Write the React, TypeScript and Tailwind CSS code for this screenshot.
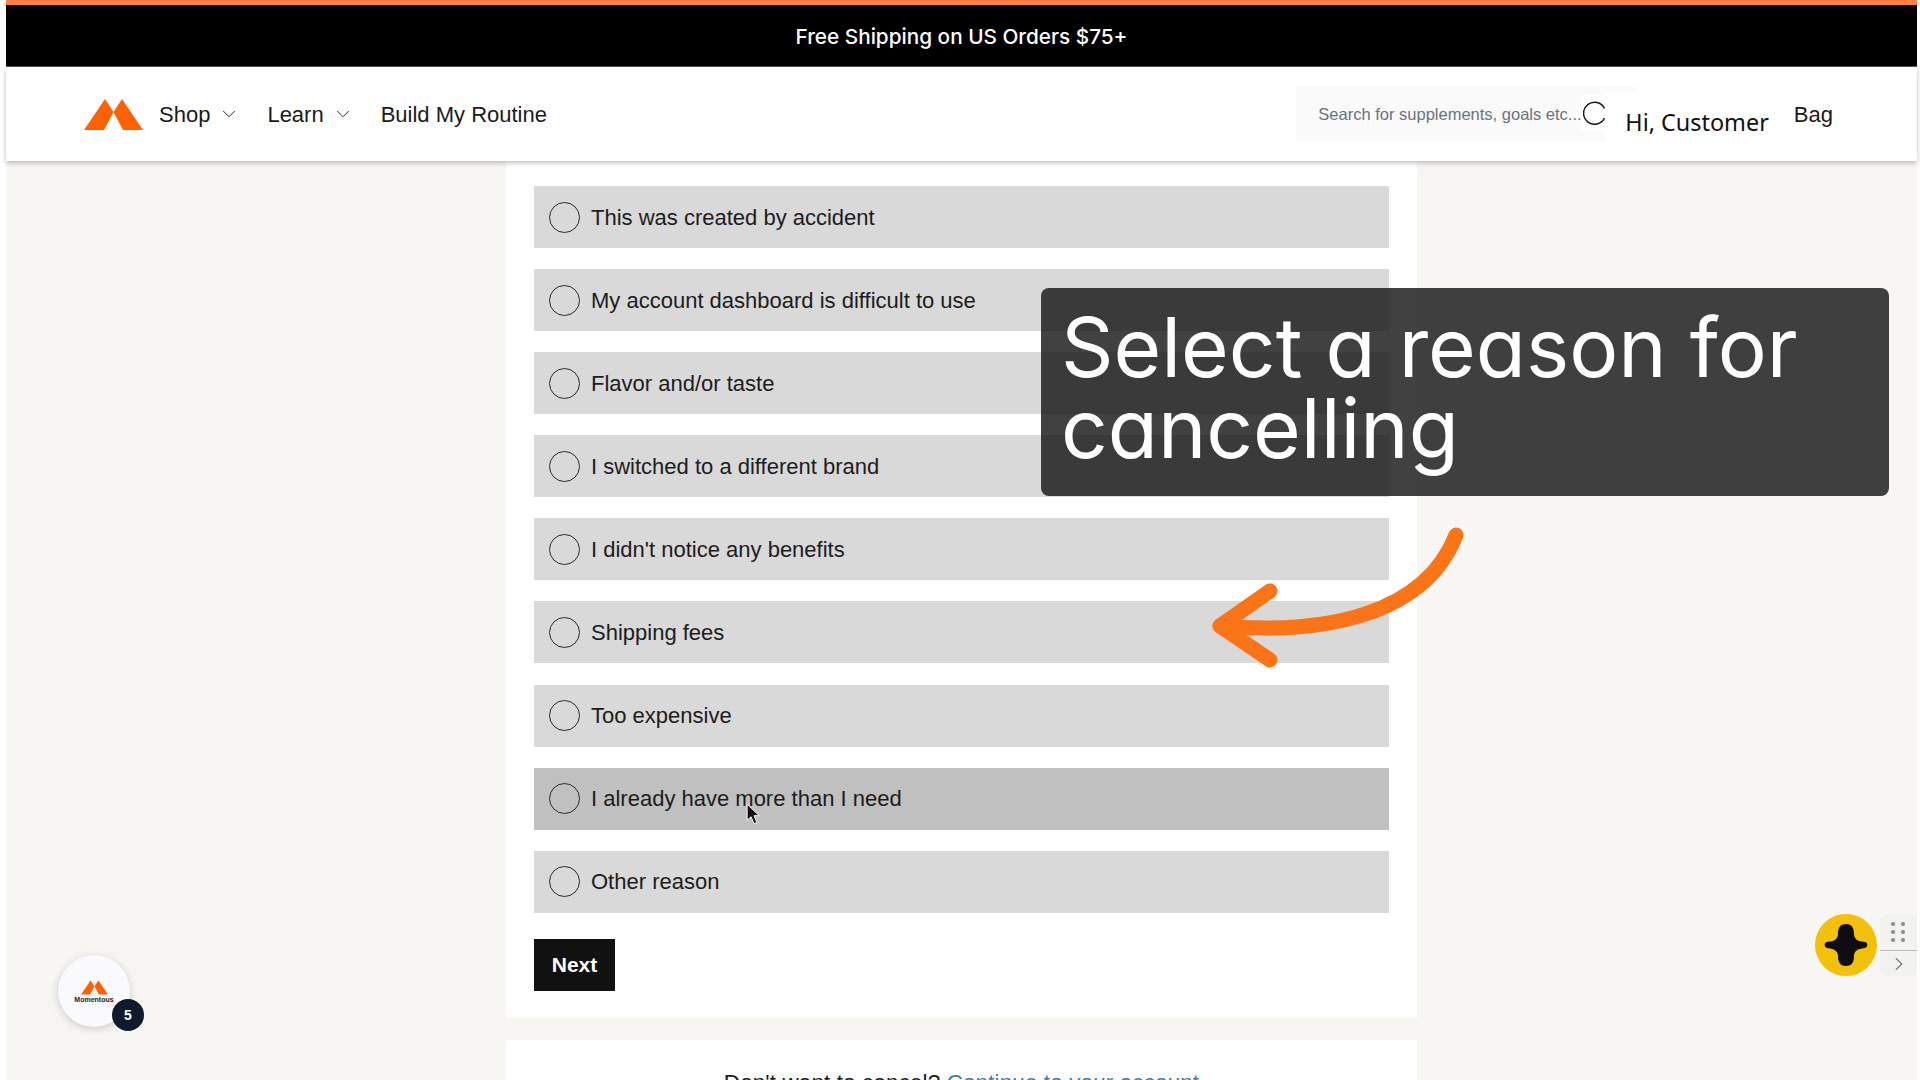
import { ChevronDown, ChevronRight } from "lucide-react";

const reasons = [
  "This was created by accident",
  "My account dashboard is difficult to use",
  "Flavor and/or taste",
  "I switched to a different brand",
  "I didn't notice any benefits",
  "Shipping fees",
  "Too expensive",
  "I already have more than I need",
  "Other reason",
];

const Logo = ({ className }: { className: string }) => (
  <svg viewBox="0 0 59 31" className={className} fill="#ff6000">
    <polygon points="0,31 21,0 29.5,13 20,31" />
    <polygon points="59,31 38,0 29.5,13 39,31" />
  </svg>
);

const ReasonRow = ({ label, hovered }: { label: string; hovered: boolean }) => (
  <div
    className={`h-[62px] flex items-center pl-[15px] ${hovered ? "bg-[#c0c0c0]" : "bg-[#d9d9d9]"}`}
  >
    <span className="w-[31px] h-[31px] rounded-full border-[1.5px] border-[#2a2a2a] shrink-0" />
    <span className="ml-[11px] text-[22px] text-[#1c1c1c]">{label}</span>
  </div>
);

export default function App() {
  return (
    <div className="relative w-[1920px] h-[1080px] overflow-hidden bg-white pl-[6px] pr-[3px] font-['Liberation_Sans',sans-serif]">
      <div className="h-[5px] bg-[#ff8140]" />
      <div className="h-[62px] bg-black flex items-center justify-center pt-[2px] text-white text-[20.75px] font-medium font-['Inter',sans-serif] border-b border-[#555]">
        Free Shipping on US Orders $75+
      </div>

      <header className="relative z-10 h-[94px] bg-white flex items-center pl-[78px] pr-[84px] shadow-[0_2px_5px_rgba(0,0,0,0.25)] text-[#1a1a1a] text-[22px]">
        <Logo className="w-[59px] h-[31px]" />
        <span className="ml-[16px]">Shop</span>
        <ChevronDown className="ml-[8px] w-[22px] h-[22px]" strokeWidth={1} />
        <span className="ml-[27px]">Learn</span>
        <ChevronDown className="ml-[8px] w-[22px] h-[22px]" strokeWidth={1} />
        <span className="ml-[27px]">Build My Routine</span>

        <div className="ml-auto self-stretch flex items-stretch">
          <div className="mt-[20px] mb-[19px] w-[341px] bg-[#fafafa] flex items-center pl-[22px] text-[16.5px] text-[#6b7280]">
            <span className="w-[263px] whitespace-nowrap">Search for supplements, goals etc...</span>
            <span className="mb-[4px] w-[28px] h-[36px] bg-white flex items-center justify-center">
              <svg viewBox="0 0 24 24" className="w-[24px] h-[24px] text-[#1a1a1a]" fill="none" stroke="currentColor" strokeWidth="1.5">
                <path d="M21.5 7.5A11 11 0 1 0 21.5 17" />
              </svg>
            </span>
          </div>
          <div className="ml-[-32px] mt-[25px] bg-white pl-[20px] flex items-start pt-[13px] font-['Noto_Sans',sans-serif] text-[23.4px] text-[#111]">
            Hi, Customer
          </div>
          <div className="ml-[25px] flex items-center text-[22px] pt-[1px]">Bag</div>
        </div>
      </header>

      <main className="bg-[#f7f6f3] h-[919px] flex flex-col items-center gap-[22px]">
        <section className="w-[911px] bg-white pt-[25px] pb-[27px] px-[28px]">
          <div className="flex flex-col gap-[21.1px]">
            {reasons.map((r, i) => (
              <ReasonRow key={r} label={r} hovered={i === 7} />
            ))}
          </div>
          <button className="mt-[26px] w-[81px] h-[52px] bg-[#111] text-white text-[21px] font-bold block">
            Next
          </button>
        </section>
        <section className="w-[911px] flex-1 bg-white pt-[26px] text-center text-[22.5px] tracking-[0.1px] text-[#1c1c1c]">
          Don't want to cancel? <span className="text-[#3f7ea6]">Continue to your account</span>
        </section>
      </main>

      {/* floating widget, bottom left */}
      <div className="absolute left-[58px] top-[955px] w-[72px] h-[72px] rounded-full bg-[#fafafc] shadow-[0_2px_8px_rgba(0,0,0,0.18)] flex flex-col items-center pt-[25px]">
        <Logo className="w-[27px] h-[15px]" />
        <span className="text-[7px] leading-[9px] font-bold text-[#222]">Momentous</span>
        <span className="absolute left-[54px] top-[44px] w-[32px] h-[32px] rounded-full bg-[#101a2c] text-white text-[14px] font-bold flex items-center justify-center">
          5
        </span>
      </div>

      {/* assistant button, right edge */}
      <div className="absolute left-[1815px] top-[914px] flex items-center">
        <div className="w-[62px] h-[62px] rounded-full bg-[#f3c00a] flex items-center justify-center">
          <svg viewBox="-24 -24 48 48" className="w-[48px] h-[48px]" fill="#0d0d12">
            <path d="M0,-21 C6,-21 8,-17 8,-11 C8,-6 12,-3.5 18,-3.2 C22.5,-3 22.5,3 18,3.2 C12,3.5 8,6 8,11 C8,17 6,21 0,21 C-6,21 -8,17 -8,11 C-8,6 -12,3.5 -18,3.2 C-22.5,3 -22.5,-3 -18,-3.2 C-12,-3.5 -8,-6 -8,-11 C-8,-17 -6,-21 0,-21 Z" />
          </svg>
        </div>
        <div className="ml-[3px] w-[37px] h-[62px] rounded-[8px] bg-[#f2f2f0] flex flex-col">
          <div className="h-[37px] border-b border-[#bbb] grid grid-cols-2 gap-x-[5px] gap-y-[4px] justify-center content-center px-[11px]">
            {[0, 1, 2, 3, 4, 5].map((d) => (
              <span key={d} className="w-[4px] h-[4px] rounded-full bg-[#8a8a8a]" />
            ))}
          </div>
          <div className="flex-1 flex items-center justify-center">
            <ChevronRight className="w-[22px] h-[22px] text-[#777]" strokeWidth={1.25} />
          </div>
        </div>
      </div>

      {/* annotation callout */}
      <div className="absolute left-[1041px] top-[288px] w-[848px] h-[208px] rounded-[8px] bg-[rgba(18,18,18,0.8)] pl-[20px] pt-[19px] text-white text-[81.9px] leading-[81px] font-normal font-['Inter',sans-serif] [font-feature-settings:'cv11']">
        Select a reason for cancelling
      </div>

      {/* annotation arrow */}
      <svg className="absolute left-[1200px] top-[510px] w-[280px] h-[180px]" viewBox="1200 510 280 180" fill="none" stroke="#fb7417" strokeWidth="15" strokeLinecap="round" strokeLinejoin="round">
        <path d="M1456 535 C1425 615 1325 635 1220 626" />
        <path d="M1270 591 L1220 626 L1270 660" />
      </svg>

      {/* cursor */}
      <svg className="absolute left-[746px] top-[803px] w-[16px] h-[23px]" viewBox="0 0 14 20">
        <path d="M1 1 L1 15 L4.5 12 L7 18 L9.5 17 L7 11 L11.5 11 Z" fill="#111" stroke="#fff" strokeWidth="0.8" />
      </svg>
    </div>
  );
}
